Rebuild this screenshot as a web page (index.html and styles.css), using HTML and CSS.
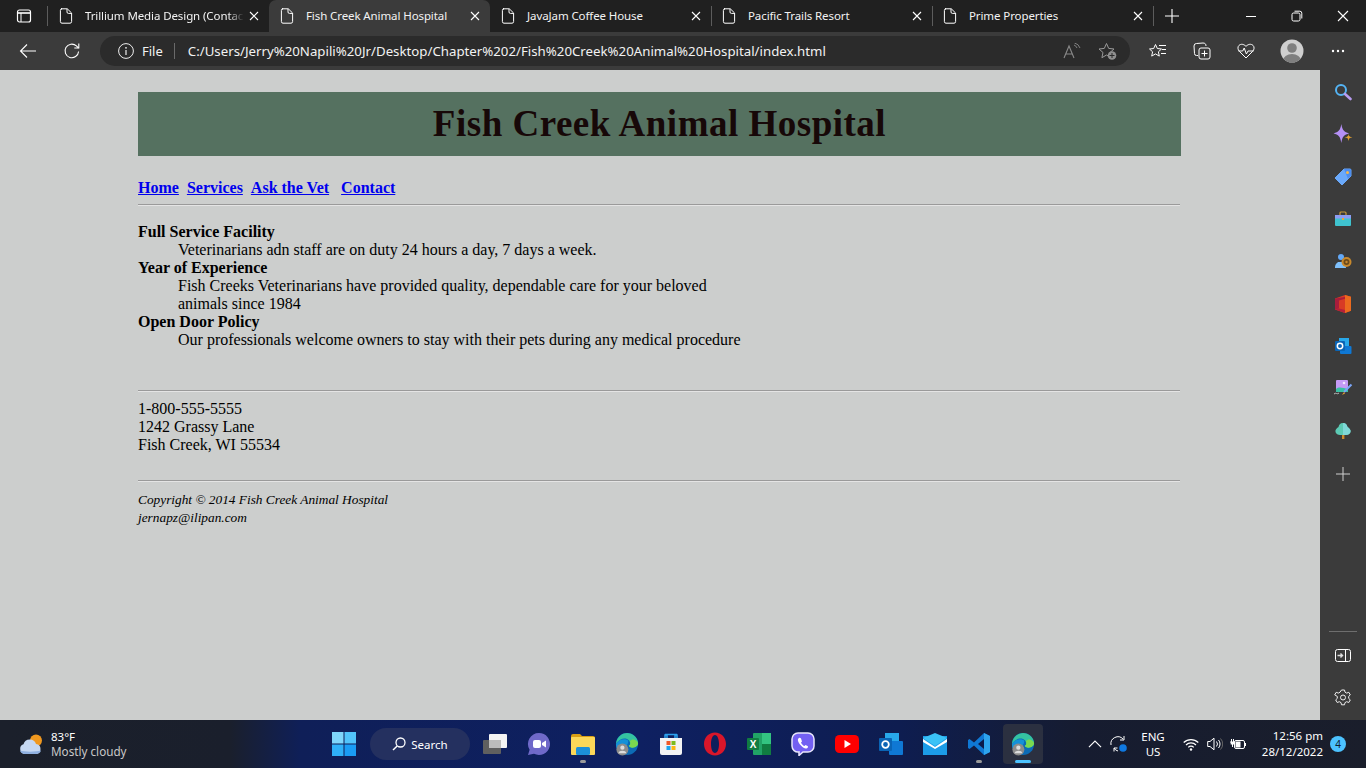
FILE: index.html
```html
<!DOCTYPE html>
<html lang="en">
<head>
<meta charset="utf-8">
<title>Fish Creek Animal Hospital</title>
<link rel="stylesheet" href="styles.css">
</head>
<body>
<svg class="defs" width="0" height="0">
  <symbol id="doc" viewBox="0 0 14 16"><path d="M2 .8h6.3L12.6 5v8.6a1.6 1.6 0 0 1-1.6 1.6H3a1.6 1.6 0 0 1-1.6-1.6V2.4A1.6 1.6 0 0 1 3 .8zM8 1v3a1.4 1.4 0 0 0 1.4 1.4h3" fill="none" stroke="#fff" stroke-width="1"/></symbol>
  <symbol id="x" viewBox="0 0 10 10"><path d="M1 1l8 8M9 1l-8 8" stroke="#fff" stroke-width="1.1" fill="none"/></symbol>
  <symbol id="edge" viewBox="0 0 26 26"><circle cx="13" cy="13" r="12" fill="#0c6bb5"/><path d="M1 13C2 4 9 1 13 1c6 0 12 5 12 11 0 3-3 5-6 5-2 0-4-1-4-2 2-1 2-4 0-6-3-3-9-3-14 4z" fill="#35c3a0"/><path d="M25 12c0 3-3 5-6 5-2 0-4-1-4-2 2-1 2-4 1-5 3-3 7-2 9 2z" fill="#7ad94f"/><path d="M1 13c4-6 10-6 13-4 1 3-1 6-4 7-2 2-2 6 1 9-6 0-10-6-10-12z" fill="#1591d8"/><circle cx="8" cy="19" r="6.5" fill="#8c8c8c"/><circle cx="8" cy="17" r="2.3" fill="#ddd"/><path d="M3.6 23a4.5 3.4 0 0 1 8.8 0z" fill="#ddd"/></symbol>
</svg>

<div class="window">
  <header class="tabbar">
    <div class="tab-leading">
      <svg class="ico" width="16" height="16" viewBox="0 0 16 16"><rect x="1.5" y="2" width="13" height="12" rx="2" fill="none" stroke="#fff" stroke-width="1.2"/><path d="M2 5h12" stroke="#fff" stroke-width="1.6"/><path d="M5 5v9" stroke="#fff" stroke-width="1"/></svg>
    </div>
    <div class="tab tab-first"><svg class="doc"><use href="#doc"/></svg><span class="tab-title fade">Trillium Media Design (Contac</span><svg class="close"><use href="#x"/></svg></div>
    <div class="tab tab-active"><svg class="doc"><use href="#doc"/></svg><span class="tab-title">Fish Creek Animal Hospital</span><svg class="close"><use href="#x"/></svg></div>
    <div class="tab tab-nosep"><svg class="doc"><use href="#doc"/></svg><span class="tab-title">JavaJam Coffee House</span><svg class="close"><use href="#x"/></svg></div>
    <div class="tab"><svg class="doc"><use href="#doc"/></svg><span class="tab-title">Pacific Trails Resort</span><svg class="close"><use href="#x"/></svg></div>
    <div class="tab"><svg class="doc"><use href="#doc"/></svg><span class="tab-title">Prime Properties</span><svg class="close"><use href="#x"/></svg></div>
    <div class="newtab"><svg width="16" height="16" viewBox="0 0 16 16"><path d="M8 1v14M1 8h14" stroke="#fff" stroke-width="1.1"/></svg></div>
    <div class="winctl">
      <span class="winbtn"><svg width="12" height="12" viewBox="0 0 12 12"><path d="M1 6.5h10" stroke="#fff"/></svg></span>
      <span class="winbtn"><svg width="12" height="12" viewBox="0 0 12 12"><rect x="1" y="3" width="8" height="8" rx="1.6" fill="none" stroke="#fff"/><path d="M3.5 1.2h5.3a2 2 0 0 1 2 2v5.3" fill="none" stroke="#fff"/></svg></span>
      <span class="winbtn"><svg width="12" height="12" viewBox="0 0 12 12"><path d="M1 1l10 10M11 1L1 11" stroke="#fff" stroke-width="1.1"/></svg></span>
    </div>
  </header>

  <div class="toolbar">
    <span class="tool tool-back"><svg width="18" height="16" viewBox="0 0 18 16"><path d="M17 8H1.5M8 1.5L1.5 8 8 14.5" fill="none" stroke="#fff" stroke-width="1.1"/></svg></span>
    <span class="tool tool-reload"><svg width="18" height="18" viewBox="0 0 18 18"><path d="M15.6 9.5a6.8 6.8 0 1 1-2.2-5.6L15.5 6" fill="none" stroke="#fff" stroke-width="1.1"/><path d="M15.8 1.5V6h-4.5" fill="none" stroke="#fff" stroke-width="1.1"/></svg></span>
    <div class="address">
      <svg class="info" width="16" height="16" viewBox="0 0 16 16"><circle cx="8" cy="8" r="7.4" fill="none" stroke="#eee" stroke-width="1"/><path d="M8 7v5" stroke="#eee" stroke-width="1.2"/><circle cx="8" cy="4.8" r=".9" fill="#eee"/></svg>
      <span class="file">File</span>
      <span class="addr-sep"></span>
      <span class="url">C:/Users/Jerry%20Napili%20Jr/Desktop/Chapter%202/Fish%20Creek%20Animal%20Hospital/index.html</span>
      <svg class="readaloud" width="18" height="16" viewBox="0 0 18 16"><path d="M1 15L6 3l5 12M2.8 11h6.4" fill="none" stroke="#8a8a8a" stroke-width="1.1"/><path d="M11 2a5 5 0 0 1 3 3M11.5 0a7.500 7.500 0 0 1 5.500 5" fill="none" stroke="#8a8a8a" stroke-width=".9"/></svg>
      <svg class="favadd" width="20" height="19" viewBox="0 0 20 19"><path d="M8.500 1.500l2.200 4.900 5.300.6-4 3.500 1.100 5.200-4.600-2.700L3.900 15.700 5 10.500 1 7l5.300-.6z" fill="none" stroke="#9a9a9a" stroke-width="1"/><circle cx="14" cy="13.500" r="4.300" fill="#8f8f8f"/><path d="M14 11v5M11.500 13.500h5" stroke="#2b2b2b" stroke-width="1"/></svg>
    </div>
    <span class="tool tool-favs"><svg width="18" height="17" viewBox="0 0 18 17"><path d="M6.500 1.500l1.800 4 4.200.5-3.100 2.800.9 4.300-3.800-2.200-3.800 2.200.9-4.300L.5 6l4.200-.5z" fill="none" stroke="#fff"/><path d="M10 2.500h7M13 6.500h4M12 10.500h5" stroke="#fff"/></svg></span>
    <span class="tool tool-coll"><svg width="18" height="18" viewBox="0 0 18 18"><path d="M5 13.500H3.500a2 2 0 0 1-2-2L1 4a2.500 2.500 0 0 1 2.500-2.500L10 1c2 0 3 1 3 3" fill="none" stroke="#fff"/><rect x="6" y="6" width="11" height="11" rx="2" fill="none" stroke="#fff"/><path d="M11.500 8.500v6M8.500 11.500h6" stroke="#fff"/></svg></span>
    <span class="tool tool-health"><svg width="18" height="16" viewBox="0 0 18 16"><path d="M9 15L2.500 8.500C.5 6.500.500 3.800 2 2.400 3.800.7 6.700.900 9 3.400c2.300-2.500 5.200-2.700 7-1 1.500 1.400 1.500 4.100-.5 6.100z" fill="none" stroke="#fff"/><path d="M1.500 8h4.200l1.500-3 2.200 6 1.600-3h5.500" fill="none" stroke="#fff"/></svg></span>
    <span class="tool tool-avatar"><svg width="24" height="24" viewBox="0 0 24 24"><defs><clipPath id="av"><circle cx="12" cy="12" r="11.500"/></clipPath></defs><circle cx="12" cy="12" r="11.500" fill="#cfcfcf"/><g clip-path="url(#av)"><circle cx="12" cy="9" r="4.800" fill="#7f7f7f"/><ellipse cx="12" cy="21.500" rx="9" ry="6.500" fill="#7f7f7f"/></g></svg></span>
    <span class="tool tool-more"><svg width="14" height="4" viewBox="0 0 14 4"><circle cx="2" cy="2" r="1.200" fill="#fff"/><circle cx="7" cy="2" r="1.200" fill="#fff"/><circle cx="12" cy="2" r="1.200" fill="#fff"/></svg></span>
  </div>

  <div class="middle">
    <main class="viewport">
      <div class="page">
        <header class="banner"><h1>Fish Creek Animal Hospital</h1></header>
        <nav class="nav">
          <a href="#">Home</a><span class="sp1"></span><a href="#">Services</a><span class="sp1"></span><a href="#">Ask the Vet</a><span class="sp2"></span><a href="#">Contact</a>
        </nav>
        <hr class="rule">
        <dl class="facts">
          <dt>Full Service Facility</dt>
          <dd>Veterinarians adn staff are on duty 24 hours a day, 7 days a week.</dd>
          <dt>Year of Experience</dt>
          <dd>Fish Creeks Veterinarians have provided quality, dependable care for your beloved<br>animals since 1984</dd>
          <dt>Open Door Policy</dt>
          <dd>Our professionals welcome owners to stay with their pets during any medical procedure</dd>
        </dl>
        <hr class="rule rule-second">
        <address class="contact">1-800-555-5555<br>1242 Grassy Lane<br>Fish Creek, WI 55534</address>
        <hr class="rule rule-third">
        <footer class="legal"><i>Copyright © 2014 Fish Creek Animal Hospital<br>jernapz@ilipan.com</i></footer>
      </div>
    </main>
    <aside class="sidebar">
      <div class="side-top">
        <span class="side-ico"><svg width="18" height="18" viewBox="0 0 18 18"><circle cx="7" cy="7" r="5" fill="none" stroke="#54b4f5" stroke-width="2"/><path d="M11 11l5.500 5" stroke="#b89cf0" stroke-width="2.600" stroke-linecap="round"/></svg></span>
        <span class="side-ico"><svg width="20" height="20" viewBox="0 0 18 18"><path d="M7.500 0c1 6 2.500 7 7 8.500-4.500 1-6 2.500-7 8.500-1-6-2.500-7.500-7-8.500C5 7 6.500 6 7.500 0z" fill="#b590f5"/><path d="M14 9c.4 2 .8 2.500 3.500 3-2.700.5-3.100 1-3.500 3.500-.4-2.500-.8-3-3.500-3.500 2.700-.5 3.100-1 3.500-3z" fill="#e0a030"/></svg></span>
        <span class="side-ico"><svg width="18" height="18" viewBox="0 0 18 18"><path d="M10 1h6a1 1 0 0 1 1 1v6L8 17 1 10z" fill="#6aa9fb" stroke="#6aa9fb" stroke-linejoin="round"/><path d="M10 1h6a1 1 0 0 1 1 1v6l-3 3z" fill="#4d8ef0"/><circle cx="13.500" cy="4.500" r="1.500" fill="#f5b84a"/></svg></span>
        <span class="side-ico"><svg width="18" height="16" viewBox="0 0 18 16"><rect x="6" y="1" width="6" height="4" rx="1" fill="none" stroke="#c99b3d" stroke-width="1.200"/><rect x="1" y="4" width="16" height="11" rx="1" fill="#3fc3cf"/><rect x="1" y="4" width="16" height="3.500" fill="#8d9cf3"/><rect x="8" y="7" width="2" height="2" fill="#e8a73a"/></svg></span>
        <span class="side-ico"><svg width="18" height="18" viewBox="0 0 18 18"><circle cx="7" cy="5" r="3" fill="#63a9f8"/><path d="M1 16c0-4 2-5 3-6h5c1 1 3 2 3 6z" fill="#7fc0fb"/><circle cx="12.500" cy="10" r="5" fill="#c8892c"/><circle cx="12.500" cy="10" r="3" fill="#6b4a1c"/><circle cx="12.500" cy="10" r="1.200" fill="#c8892c"/></svg></span>
        <span class="side-ico"><svg width="18" height="20" viewBox="0 0 18 20"><path d="M1 4.500L11 1l6 1.800v14L11 19 1 15.500z" fill="#d83b25"/><path d="M11 1l6 1.800v14L11 19z" fill="#eb6a1e"/><path d="M1 4.500l10-1.500v1.800L5 6.500v8L1 15.500z" fill="#a81d3c"/><path d="M11 19L1 15.500 5 14.500 11 16z" fill="#b5203a"/></svg></span>
        <span class="side-ico"><svg width="18" height="18" viewBox="0 0 18 18"><rect x="5" y="1" width="10" height="8" fill="#28a8ea"/><rect x="6" y="9" width="11.500" height="8" rx="1" fill="#0f78d4"/><rect x="1" y="4" width="10" height="10" rx="1" fill="#0a64b5"/><circle cx="6" cy="9" r="2.700" fill="none" stroke="#fff" stroke-width="1.500"/></svg></span>
        <span class="side-ico"><svg width="20" height="18" viewBox="0 0 20 18"><rect x="3" y="1" width="12" height="11" rx="1" fill="#c49af5"/><path d="M3 10c3-3 7-1 12 0v3H3z" fill="#39bfa3"/><circle cx="11" cy="4" r="1.300" fill="#f2e6ff"/><path d="M18.500 5.500L11 13" stroke="#7aa5f7" stroke-width="2"/><path d="M11 13l-2 3 3-1.500z" fill="#e0a030"/><path d="M1 15c2-2 3 1 5-1" fill="none" stroke="#bbb"/></svg></span>
        <span class="side-ico"><svg width="18" height="18" viewBox="0 0 18 18"><path d="M9 1c3 0 4 2 4.500 4 2 1 3.500 3 3 5s-2.500 3-4.500 3H6c-2 0-4-1-4.500-3S2.500 6 4.500 5C5 3 6 1 9 1z" fill="#5ccab4"/><path d="M9 1c3 0 4 2 4.500 4 2 1 3.500 3 3 5s-2.500 3-4.500 3H9z" fill="#7fd8d8"/><rect x="8" y="13" width="2.400" height="4" fill="#c98a2c"/></svg></span>
        <span class="side-ico side-add"><svg width="14" height="14" viewBox="0 0 14 14"><path d="M7 0v14M0 7h14" stroke="#cfcfcf"/></svg></span>
      </div>
      <div class="side-bottom">
        <span class="side-line"></span>
        <span class="side-ico side-panel"><svg width="16" height="14" viewBox="0 0 16 14"><rect x=".5" y=".5" width="15" height="12" rx="2" fill="none" stroke="#fff"/><path d="M10.500 .5v12" stroke="#fff"/><path d="M2.500 6.500h5M5.500 4.500l2 2-2 2" fill="none" stroke="#ddd" stroke-width="1.400"/></svg></span>
        <span class="side-ico side-gear"><svg width="18" height="18" viewBox="0 0 18 18"><path d="M7.500 1h3l.5 2.200 1.700.9 2.100-.8 1.500 2.600-1.600 1.500v2l1.600 1.500-1.500 2.600-2.100-.8-1.700.9-.5 2.200h-3L7 13.600l-1.700-.9-2.100.8-1.500-2.600 1.600-1.500v-2L.7 5.900l1.500-2.600 2.100.8L6 3.200z" fill="none" stroke="#eee" stroke-linejoin="round"/><circle cx="9" cy="8.500" r="2.500" fill="none" stroke="#eee"/></svg></span>
      </div>
    </aside>
  </div>

  <footer class="taskbar">
    <div class="weather">
      <svg width="26" height="22" viewBox="0 0 26 22"><circle cx="17" cy="7.500" r="6" fill="#f0981f"/><path d="M6 21a5 5 0 0 1-1.500-9.700A6.500 6.500 0 0 1 17 11a5 5 0 0 1 4.500 5c0 3-2 5-5 5z" fill="#c6d8f2"/><path d="M1 17.500c5 1.500 15 1.500 21 0-.5 2-2.500 3.500-5 3.500H6c-2.500 0-4.500-1.500-5-3.500z" fill="#8fb0e0"/></svg>
      <div class="weather-text"><span class="temp">83°F</span><span class="cond">Mostly cloudy</span></div>
    </div>
    <div class="task-center">
      <span class="slot"><svg width="24" height="24" viewBox="0 0 24 24"><rect x="0" y="0" width="11.500" height="11.500" fill="#7fd6fb"/><rect x="12.500" y="0" width="11.500" height="11.500" fill="#52c4fb"/><rect x="0" y="12.500" width="11.500" height="11.500" fill="#2fb0f8"/><rect x="12.500" y="12.500" width="11.500" height="11.500" fill="#1a9cf5"/></svg></span>
      <div class="search"><svg width="14" height="14" viewBox="0 0 14 14"><circle cx="8.500" cy="5.500" r="4.500" fill="none" stroke="#fff" stroke-width="1.300"/><path d="M5.200 9L1 13" stroke="#fff" stroke-width="1.500"/></svg><span>Search</span></div>
      <span class="slot"><svg width="24" height="20" viewBox="0 0 24 20"><rect x="0" y="6" width="18" height="14" rx="1" fill="#5f5f5f"/><rect x="6" y="0" width="18" height="14" rx="1" fill="#f4f4f4"/><rect x="6" y="6" width="12" height="8" fill="#bcbcbc"/></svg></span>
      <span class="slot"><svg width="24" height="24" viewBox="0 0 24 24"><path d="M12 1a11 11 0 1 1-5 20.800L1 23l1.600-5.300A11 11 0 0 1 12 1z" fill="#6f69c9"/><rect x="6" y="8" width="8" height="8" rx="2" fill="#fff"/><path d="M15 11l4-2.500v7L15 13z" fill="#fff"/></svg></span>
      <span class="slot slot-open"><svg width="24" height="21" viewBox="0 0 24 21"><path d="M0 2a2 2 0 0 1 2-2h7l2 2h11a2 2 0 0 1 2 2v3H0z" fill="#d99e14"/><rect y="3" width="24" height="18" rx="1" fill="#fcd758"/><rect x="5" y="13" width="14" height="8" rx="1.500" fill="#1c8fd9"/></svg><i class="pip"></i></span>
      <span class="slot"><svg width="24" height="24"><use href="#edge"/></svg></span>
      <span class="slot"><svg width="24" height="24" viewBox="0 0 24 24"><path d="M6 6V3h2v3M16 6V3h2v3" fill="none" stroke="#2ea2ee" stroke-width="1.500"/><path d="M6 2.500h12" stroke="#2ea2ee" stroke-width="1.500"/><path d="M1 6h22v15a2 2 0 0 1-2 2H3a2 2 0 0 1-2-2z" fill="#f3f3f3"/><rect x="7.500" y="9" width="4" height="4" fill="#f05a28"/><rect x="12.500" y="9" width="4" height="4" fill="#7dbb1e"/><rect x="7.500" y="14" width="4" height="4" fill="#1ca6ef"/><rect x="12.500" y="14" width="4" height="4" fill="#fbb814"/></svg></span>
      <span class="slot"><svg width="24" height="24" viewBox="0 0 24 24"><path fill-rule="evenodd" d="M12 0.500c6.300 0 11 5 11 11.500s-4.700 11.500-11 11.500S1 18.500 1 12 5.700.500 12 .500zM12 3c-2.500 0-4 4-4 9s1.500 9 4 9 4-4 4-9-1.500-9-4-9z" fill="#d9162a"/></svg></span>
      <span class="slot"><svg width="24" height="22" viewBox="0 0 24 22"><rect x="6" y="0" width="18" height="22" rx="1" fill="#21a366"/><rect x="15" y="0" width="9" height="11" fill="#33c481"/><rect x="15" y="11" width="9" height="11" fill="#107c41"/><rect x="0" y="5" width="12" height="12" rx="1" fill="#107c41"/><text class="xl" x="6" y="15">X</text></svg></span>
      <span class="slot"><svg width="24" height="24" viewBox="0 0 24 24"><path d="M7 1h10a6 6 0 0 1 6 6v7a6 6 0 0 1-6 6h-5l-4 3.500V20a6 6 0 0 1-7-6V7a6 6 0 0 1 6-6z" fill="#7360f2" stroke="#e8e6fb" stroke-width="1.500"/><path d="M8 6c-2 1-1 4 1 6.500s5 4.500 6.500 4 2-2 1-2.500l-2-1-1 1c-1 0-3-2-3.500-3.500l1-1-1-3c-.5-.5-1-1-2-.5z" fill="#fff"/></svg></span>
      <span class="slot"><svg width="24" height="18" viewBox="0 0 24 18"><rect width="24" height="18" rx="4.500" fill="#f00"/><path d="M9.500 5v8l6.500-4z" fill="#fff"/></svg></span>
      <span class="slot"><svg width="24" height="22" viewBox="0 0 24 22"><rect x="6" y="0" width="14" height="12" fill="#28a8ea"/><rect x="10" y="8" width="14" height="14" rx="1" fill="#0f78d4"/><rect x="0" y="5" width="13" height="13" rx="1" fill="#0a64b5"/><circle cx="6.500" cy="11.500" r="3.300" fill="none" stroke="#fff" stroke-width="1.800"/></svg></span>
      <span class="slot"><svg width="24" height="22" viewBox="0 0 24 22"><rect y="3" width="24" height="19" fill="#1c9ce8"/><path d="M0 5L12 0l12 5-12 8z" fill="#3ac2f6"/><path d="M0 6l12 8 12-8v3l-12 7L0 9z" fill="#fff"/></svg></span>
      <span class="slot slot-open"><svg width="24" height="24" viewBox="0 0 24 24"><path d="M17 1l6 3v16l-6 3L7 13.500 2.500 17 1 16V8l1.500-1L7 10.500z" fill="#0f78d4"/><path d="M17 1l6 3v16l-6 3z" fill="#2ea5ee"/><path d="M17 7l-6 5 6 5z" fill="#0b1a4a"/></svg><i class="pip"></i></span>
      <span class="slot slot-active"><svg width="24" height="24"><use href="#edge"/></svg><i class="pip pip-active"></i></span>
    </div>
    <div class="tray">
      <svg class="tray-chev" width="14" height="8" viewBox="0 0 12 7"><path d="M.7 6.300L6 1l5.300 5.300" fill="none" stroke="#fff" stroke-width="1"/></svg>
      <svg class="tray-sync" width="18" height="18" viewBox="0 0 18 18"><path d="M1 10a7 7 0 0 1 12-6M14 1v4h-4M4 16.500V13h3.500M4 13a6 6 0 0 0 4 3" fill="none" stroke="#fff" stroke-width="1"/><circle cx="13" cy="13" r="3.800" fill="#0f78e0"/></svg>
      <div class="lang"><span>ENG</span><span>US</span></div>
      <svg class="tray-wifi" width="16" height="13" viewBox="0 0 16 13"><path d="M.7 4.500a10.500 10.500 0 0 1 14.600 0M3 7a7 7 0 0 1 10 0M5.300 9.300a3.600 3.600 0 0 1 5.400 0" fill="none" stroke="#fff" stroke-width="1.200"/><circle cx="8" cy="11.500" r="1.200" fill="#fff"/></svg>
      <svg class="tray-vol" width="16" height="14" viewBox="0 0 16 14"><path d="M.7 4.500H3L7 1.200v11.600L3 9.500H.7z" fill="none" stroke="#fff"/><path d="M9.500 4.500a4 4 0 0 1 0 5M11.500 3a6 6 0 0 1 0 8" fill="none" stroke="#fff"/><path d="M13.500 1.500a8 8 0 0 1 0 11" fill="none" stroke="#666"/></svg>
      <svg class="tray-bat" width="16" height="12" viewBox="0 0 16 12"><rect x="4.500" y="2.500" width="10" height="8" rx="1.500" fill="none" stroke="#fff"/><rect x="5.500" y="3.500" width="5" height="6" fill="#fff"/><path d="M15.500 5v3" stroke="#fff"/><path d="M0 4h5M1.500 1v3M3.500 1v3M2.500 6v3" stroke="#fff"/><rect x=".7" y="4" width="3.500" height="2.500" fill="#fff"/></svg>
      <div class="clock"><span>12:56 pm</span><span>28/12/2022</span></div>
      <span class="notif">4</span>
    </div>
  </footer>
</div>
</body>
</html>
```

FILE: styles.css
```css
* { box-sizing: border-box; }
html, body { margin: 0; height: 100%; overflow: hidden; }
body { font-family: "Noto Sans", "Open Sans", sans-serif; color: #fff; background: #202020; }
.defs { position: absolute; }
.window { width: 1366px; height: 768px; display: flex; flex-direction: column; }

/* Tab strip */
.tabbar { height: 32px; background: #202020; display: flex; align-items: stretch; flex: none; }
.tab-leading { width: 48px; display: flex; align-items: center; padding-left: 16px; border-right: 1px solid #5c5c5c; margin: 6px 0; }
.tab { width: 221px; display: flex; align-items: center; padding: 0 10px 0 11px; position: relative; font-size: 11.5px; }
.tab::before { content: ""; position: absolute; left: 0; top: 6px; bottom: 6px; width: 1px; background: #5c5c5c; }
.tab-first::before, .tab-active::before, .tab-nosep::before { display: none; }
.tab-active { background: #3b3b3b; border-radius: 7px 7px 0 0; }
.doc { width: 14px; height: 16px; flex: none; }
.tab-title { margin-left: 12px; flex: 1; min-width: 0; white-space: nowrap; color: #f2f2f2; letter-spacing: -0.1px; padding-bottom: 2px; }
.fade { flex: 0 0 159px; width: 159px; margin-right: 5px; -webkit-mask-image: linear-gradient(90deg, #000 90%, transparent 100%); mask-image: linear-gradient(90deg, #000 90%, transparent 100%); }
.close { width: 10px; height: 10px; flex: none; }
.newtab { width: 37px; display: flex; align-items: center; justify-content: center; position: relative; }
.newtab::before { content: ""; position: absolute; left: 0; top: 6px; bottom: 6px; width: 1px; background: #5c5c5c; }
.winctl { margin-left: auto; display: flex; align-items: center; }
.winbtn { width: 46px; display: flex; justify-content: center; }

/* Toolbar */
.toolbar { height: 38px; background: #3b3b3b; display: flex; align-items: center; flex: none; }
.tool { display: flex; justify-content: center; align-items: center; height: 30px; flex: none; }
.tool-back { width: 56px; }
.tool-reload { width: 32px; }
.address { margin-left: 12px; width: 1030px; height: 30px; background: #2b2b2b; border-radius: 15px; display: flex; align-items: center; padding-left: 18px; }
.info { flex: none; }
.file { margin-left: 8px; font-size: 13px; color: #f2f2f2; }
.addr-sep { width: 1px; height: 16px; background: #6a6a6a; margin: 0 13px 0 11px; }
.url { font-size: 13.26px; color: #f2f2f2; white-space: nowrap; flex: 1; }
.readaloud { flex: none; margin-right: 17px; }
.favadd { flex: none; margin-right: 12px; }
.tool-favs { width: 44px; margin-left: 6px; }
.tool-coll { width: 44px; }
.tool-health { width: 44px; }
.tool-avatar { width: 48px; }
.tool-more { width: 44px; }

/* Middle region */
.middle { flex: 1; display: flex; min-height: 0; }
.viewport { flex: 1; background: #cccecd; color: #000; font-family: "Liberation Serif", "Times New Roman", serif; font-size: 16px; line-height: 18px; padding: 22px 0 0 138px; }
.page { width: 1043px; }
.banner { height: 64px; background: #557160; display: flex; align-items: center; justify-content: center; }
.banner h1 { margin: 0; font-family: "Liberation Serif", Georgia, serif; font-weight: 700; font-size: 37px; line-height: 64px; color: #170808; letter-spacing: 0.5px; }
.nav { margin-top: 23px; font-weight: 700; display: flex; height: 18px; }
.nav a { color: #0000ee; text-decoration: underline; }
.sp1 { width: 8px; }
.sp2 { width: 12px; }
.rule { margin: 7px 0 0; border: 0; height: 2px; width: 1042px; border-top: 1px solid #9a9a9a; border-bottom: 1px solid #e4e4e4; }
.facts { margin: 17px 0 0; }
.facts dt { font-weight: 700; }
.facts dd { margin: 0 0 0 40px; }
.rule-second { margin-top: 41px; }
.contact { font-style: normal; margin-top: 8px; }
.rule-third { margin-top: 26px; }
.legal { margin-top: 9px; font-size: 13.33px; line-height: 18px; }

/* Sidebar */
.sidebar { width: 46px; flex: none; background: #3b3b3b; display: flex; flex-direction: column; justify-content: space-between; align-items: center; padding: 1px 0; }
.side-top { display: flex; flex-direction: column; align-items: center; }
.side-ico { height: 42.3px; width: 46px; display: flex; align-items: center; justify-content: center; }
.side-add { margin-top: 1.5px; }
.side-bottom { display: flex; flex-direction: column; align-items: center; }
.side-line { width: 28px; height: 1px; background: #6e6e6e; margin-bottom: 3px; }
.side-panel { height: 42px; }

/* Taskbar */
.taskbar { height: 48px; flex: none; display: flex; align-items: center; position: relative; background: linear-gradient(90deg, #1b202b 0, #1a1f2c 230px, #0f1f58 300px, #0e2061 640px, #0e1d50 900px, #161c30 1080px, #1a1e2b 1366px); }
.weather { display: flex; align-items: center; padding-left: 19px; width: 322px; }
.weather-text { display: flex; flex-direction: column; margin-left: 6px; font-size: 11.7px; line-height: 15px; }
.temp { color: #fff; font-size: 11.5px; }
.cond { color: #c8c8c8; }
.task-center { display: flex; align-items: center; height: 48px; }
.slot { width: 44px; height: 40px; display: flex; align-items: center; justify-content: center; position: relative; flex: none; }
.search { width: 100px; height: 32px; margin: 0 3px 0 4px; border-radius: 16px; background: #24305f; display: flex; align-items: center; justify-content: center; gap: 5px; font-size: 11.5px; flex: none; }
.slot-active { width: 40px; margin: 0 2px; background: #2b3040; border-radius: 4px; }
.pip { position: absolute; left: 19px; bottom: 1px; width: 6px; height: 3px; border-radius: 2px; background: #9a9a9a; }
.pip-active { left: 12px; width: 16px; background: #4cc2ff; }
.xl { font: 700 10px "Liberation Sans", sans-serif; fill: #fff; text-anchor: middle; }
.tray { position: absolute; left: 1088px; top: 0; height: 48px; right: 0; display: flex; align-items: center; font-size: 12px; }
.tray-sync { margin-left: 8px; }
.lang { width: 50px; display: flex; flex-direction: column; align-items: center; line-height: 15px; font-size: 11.5px; }
.tray-wifi { margin-left: 5px; }
.tray-vol { margin-left: 8px; }
.tray-bat { margin-left: 7px; }
.clock { margin-left: 7px; width: 70px; display: flex; flex-direction: column; align-items: flex-end; line-height: 16px; font-size: 11.5px; }
.notif { margin-left: 7px; width: 16px; height: 16px; border-radius: 50%; background: #4cc2ff; color: #10202c; font-size: 10px; display: flex; align-items: center; justify-content: center; }
```
